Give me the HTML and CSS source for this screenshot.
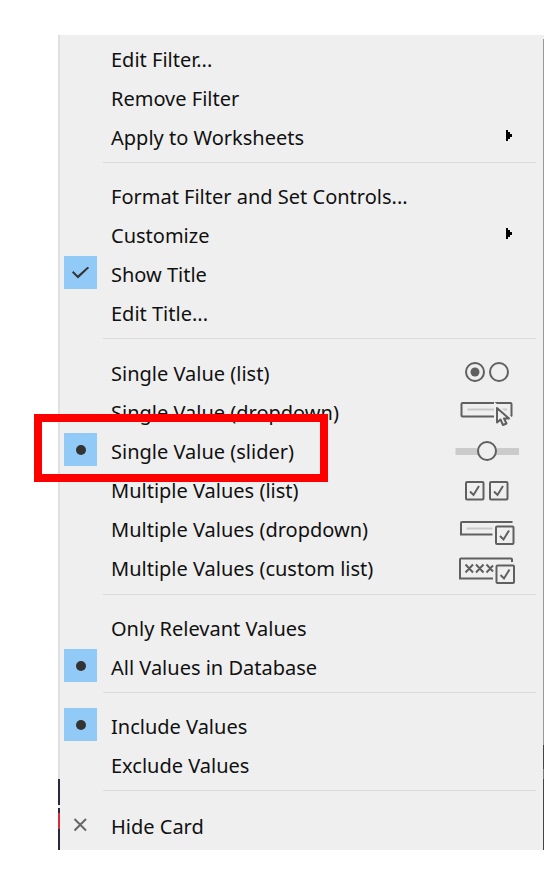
FILE: index.html
```html
<!DOCTYPE html>
<html lang="en">
<head>
<meta charset="utf-8">
<meta name="viewport" content="width=device-width, initial-scale=1">
<title>Filter menu</title>
<link rel="stylesheet" href="styles.css">
</head>
<body>
<main class="menu">
  <div class="group">
    <button class="item" type="button"><span class="label">Edit Filter...</span></button>
    <button class="item" type="button"><span class="label">Remove Filter</span></button>
    <button class="item" type="button"><span class="label">Apply to Worksheets</span>
      <svg class="icon" viewBox="0 0 64 39" aria-hidden="true"><path class="arrow" d="M51 12h2v2h2v2h2v3h-2v2h-2v2h-2z"/></svg></button>
  </div>
  <hr class="separator">
  <div class="group">
    <button class="item" type="button"><span class="label">Format Filter and Set Controls...</span></button>
    <button class="item" type="button"><span class="label">Customize</span>
      <svg class="icon" viewBox="0 0 64 39" aria-hidden="true"><path class="arrow" d="M51 12h2v2h2v2h2v3h-2v2h-2v2h-2z"/></svg></button>
    <label class="item"><input class="mark check" type="checkbox" checked><span class="label">Show Title</span></label>
    <button class="item" type="button"><span class="label">Edit Title...</span></button>
  </div>
  <hr class="separator">
  <div class="group modes">
    <label class="item"><input class="mark dot" type="radio" name="mode"><span class="label">Single Value (list)</span>
      <svg class="icon" viewBox="0 0 64 39" aria-hidden="true"><circle cx="20" cy="18" r="9"/><circle class="solid" cx="20" cy="18" r="4.5"/><circle cx="44" cy="18" r="9"/></svg></label>
    <label class="item"><input class="mark dot" type="radio" name="mode"><span class="label">Single Value (dropdown)</span>
      <svg class="icon" viewBox="0 0 64 39" aria-hidden="true"><rect x="6.5" y="10" width="50" height="13.5" rx="1"/><path class="faint" d="M12.500 16.500H52"/><path class="halo" d="M42 15V29.500L45.500 26.500L48 32L51.500 30.500L49 25.500H54Z"/><path class="pointer" d="M42 15V29.500L45.500 26.500L48 32L51.500 30.500L49 25.500H54Z"/></svg></label>
    <label class="item marked"><input class="mark dot" type="radio" name="mode" checked><span class="label">Single Value (slider)</span>
      <svg class="icon" viewBox="0 0 64 39" aria-hidden="true"><path class="track" d="M0.500 19.500H64"/><circle class="knob" cx="32" cy="19" r="9"/></svg></label>
    <label class="item"><input class="mark dot" type="checkbox"><span class="label">Multiple Values (list)</span>
      <svg class="icon" viewBox="0 0 64 39" aria-hidden="true"><rect x="11" y="11" width="17.500" height="17.500" rx="1"/><path d="M15 20.500L18.500 24L24 15"/><rect x="35" y="11" width="17.500" height="17.500" rx="1"/><path d="M39 20.500L42.500 24L48 15"/></svg></label>
    <label class="item"><input class="mark dot" type="checkbox"><span class="label">Multiple Values (dropdown)</span>
      <svg class="icon" viewBox="0 0 64 39" aria-hidden="true"><path d="M56.500 13V12H7Q6 12 6 13V24.500H37.500"/><path class="faint" d="M11.500 18.500H37.500"/><rect x="41" y="16.500" width="17.500" height="17.500" rx="1"/><path d="M45 26L48.500 29.500L54 20.500"/></svg></label>
    <label class="item"><input class="mark dot" type="checkbox"><span class="label">Multiple Values (custom list)</span>
      <svg class="icon" viewBox="0 0 64 39" aria-hidden="true"><path d="M57 13V10.500Q57 9.500 56 9.500H6Q5 9.500 5 10.500V29.500H38"/><path class="crosses" d="M10.500 15.500l7.500 8m0-8l-7.500 8M21 15.500l7.500 8m0-8l-7.500 8M31.500 15.500l6.500 7M38 16.500l-6.500 7"/><rect x="41.500" y="16.500" width="17.500" height="17.500" rx="1"/><path d="M45.500 26L49 29.500L54.500 20.500"/></svg></label>
  </div>
  <hr class="separator">
  <div class="group">
    <label class="item"><input class="mark dot" type="radio" name="scope"><span class="label">Only Relevant Values</span></label>
    <label class="item"><input class="mark dot" type="radio" name="scope" checked><span class="label">All Values in Database</span></label>
  </div>
  <hr class="separator">
  <div class="group">
    <label class="item"><input class="mark dot" type="radio" name="include" checked><span class="label">Include Values</span></label>
    <label class="item"><input class="mark dot" type="radio" name="include"><span class="label">Exclude Values</span></label>
  </div>
  <hr class="separator">
  <div class="group closing">
    <button class="item" type="button"><svg class="mark close" viewBox="0 0 33 33" aria-hidden="true"><path d="M10.500 11L22 22.500M22 11L10.500 22.500"/></svg><span class="label">Hide Card</span></button>
  </div>
</main>
</body>
</html>
```
FILE: styles.css
```css
*,
*::before,
*::after {
  box-sizing: border-box;
}

body {
  margin: 0;
  padding: 35px 16px 20px 58px;
  background: #fff;
  font-family: "Noto Sans", "Open Sans", sans-serif;
  font-size: 20px;
  color: #111;
}

.menu {
  position: relative;
  padding: 5px 8px 4px 6px;
  background: #efefef;
}

/* Thin slivers of the window behind, visible along both edges */
.menu::before,
.menu::after {
  content: "";
  position: absolute;
  top: 0;
  bottom: 0;
}

.menu::before {
  left: 0;
  width: 2px;
  background: linear-gradient(to top,
    #29283f 21px, #d52c3c 21px 37px, #29283f 37px 42px,
    #eee 42px 45px, #29283f 45px 71px, #e0e0e0 71px);
}

.menu::after {
  right: 0;
  width: 1px;
  background: linear-gradient(to top,
    #444 71px, #777 71px 81px, #444 81px 105px, #999 105px calc(100% - 4px), #eee calc(100% - 4px));
}

.item {
  display: grid;
  grid-template-columns: 33px 1fr auto;
  column-gap: 14px;
  align-items: center;
  position: relative;
  width: 100%;
  height: 39px;
  padding: 0 17px 0 0;
  border: 0;
  background: none;
  color: inherit;
  font: inherit;
  line-height: 39px;
  text-align: left;
  white-space: nowrap;
}

.label {
  grid-column: 2;
}

.modes {
  padding: 1px 0;
}

.closing {
  padding-top: 2px;
}

.separator {
  height: 1px;
  margin: 5px 0 14px 39px;
  border: 0;
  background: #dadada;
}

.mark {
  appearance: none;
  display: grid;
  place-items: center;
  grid-column: 1;
  grid-row: 1;
  width: 33px;
  height: 33px;
  margin: 0 0 4px;
}

.mark:checked {
  background: #91c9f7;
}

.mark:checked::before {
  content: "";
  background: #333;
}

.dot:checked::before {
  width: 10px;
  height: 10px;
  border-radius: 50%;
}

.check:checked::before {
  width: 17px;
  height: 12px;
  clip-path: polygon(0 50%, 8% 38%, 34% 74%, 93% 0, 100% 12%, 35% 100%);
}

.close {
  fill: none;
  stroke: #666;
  stroke-width: 2;
}

.icon {
  grid-column: 3;
  width: 64px;
  height: 39px;
  fill: none;
  stroke: #606060;
  stroke-width: 2;
}

.icon .arrow {
  fill: #000;
  stroke: none;
}

.icon .solid {
  fill: #606060;
  stroke: none;
}

.icon .faint {
  stroke: #c8c8c8;
}

.icon .track {
  stroke: #cbcbcb;
  stroke-width: 7;
}

.icon .knob,
.icon .pointer {
  fill: #efefef;
}

.icon .pointer {
  stroke-linejoin: round;
}

.icon .halo {
  stroke: #efefef;
  stroke-width: 6;
}

/* Highlight frame around the slider option */
.marked::after {
  content: "";
  position: absolute;
  z-index: 1;
  top: -18px;
  left: -30px;
  width: 294px;
  height: 68px;
  border: 8px solid #fe0000;
}
```
